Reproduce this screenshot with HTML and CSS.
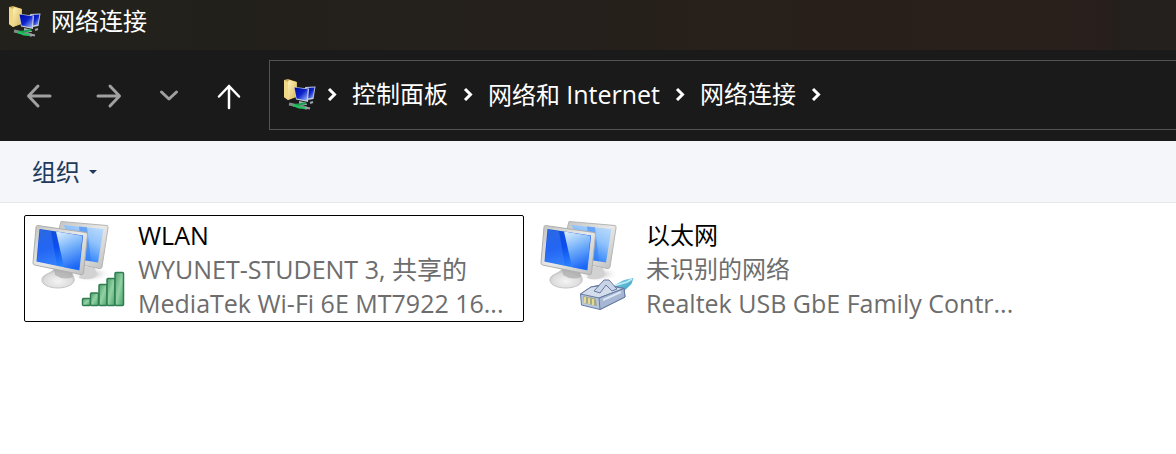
FILE: index.html
```html
<!DOCTYPE html>
<html lang="zh-CN">
<head>
<meta charset="utf-8">
<meta name="viewport" content="width=device-width, initial-scale=1">
<title>网络连接</title>
<link rel="stylesheet" href="styles.css">
</head>
<body>
<svg class="defs" width="0" height="0" aria-hidden="true">
  <defs>
    <linearGradient id="gold" x1="0" x2="1" y1="0" y2="1"><stop offset="0" stop-color="#fff3b8"/><stop offset="1" stop-color="#d9b65a"/></linearGradient>
    <linearGradient id="navy" x1="0" x2="1" y1="0" y2="1"><stop offset="0" stop-color="#000a9c"/><stop offset=".5" stop-color="#0c22cc"/><stop offset="1" stop-color="#a9c4fb"/></linearGradient>
    <linearGradient id="screen" x1="0" x2=".3" y1="0" y2="1"><stop offset="0" stop-color="#1350d2"/><stop offset=".5" stop-color="#0b4df0"/><stop offset="1" stop-color="#2c86ff"/></linearGradient>
    <linearGradient id="glare" x1=".2" x2=".5" y1="0" y2="1"><stop offset="0" stop-color="#d5eafd"/><stop offset=".45" stop-color="#76b2fa"/><stop offset="1" stop-color="#1a66f8"/></linearGradient>
    <linearGradient id="rear" x1="1" x2=".4" y1="0" y2="1"><stop offset="0" stop-color="#c5e0fc"/><stop offset=".45" stop-color="#8fc2fb"/><stop offset="1" stop-color="#1670fa"/></linearGradient>
    <linearGradient id="frame" x1="0" x2="1" y1="0" y2="1"><stop offset="0" stop-color="#c4c4c2"/><stop offset=".5" stop-color="#e9e9e7"/><stop offset="1" stop-color="#bdbdbb"/></linearGradient>
    <radialGradient id="stand" cx=".5" cy=".65" r=".6"><stop offset="0" stop-color="#f4f4f4"/><stop offset=".7" stop-color="#dcdcdc"/><stop offset="1" stop-color="#bdbdbd"/></radialGradient>
    <radialGradient id="shade"><stop offset="0" stop-color="#8d8d8d"/><stop offset="1" stop-color="#fff" stop-opacity="0"/></radialGradient>
    <linearGradient id="signal" x1="0" x2="1" y1="0" y2="1"><stop offset="0" stop-color="#4fa06c"/><stop offset=".5" stop-color="#92d2a4"/><stop offset="1" stop-color="#49a068"/></linearGradient>
    <linearGradient id="cable" x1="0" x2="1" y1="0" y2="1"><stop offset="0" stop-color="#93d8ec"/><stop offset="1" stop-color="#2c9cc0"/></linearGradient>

    <symbol id="connections" viewBox="0 0 34 34">
      <path d="M2 3 6 2 15 5V19L6 23 2 20Z" fill="#cda954"/>
      <path d="M2 3 6 5V23L2 20Z" fill="#efd888"/>
      <path d="M6 5 7 3 14.500 5V20L6 23Z" fill="url(#gold)"/>
      <path d="M23 10 33.500 9.500 31.500 22 26 23Z" fill="#c3cede"/>
      <path d="M24 11 32.500 10.500 30.800 20.500 26 21.500Z" fill="url(#navy)"/>
      <path d="M12 10 27 11.500 26 25 14 22.500Z" fill="#c6cddb"/>
      <path d="M12.500 10.500 25.800 12.300 24.800 23.400 14.600 21.400Z" fill="url(#navy)"/>
      <path d="M17 24 24 25.500 25 28 17 28Z" fill="#aab0b5"/>
      <path d="M7 27 12 28 18 28.500 25 31.500" fill="none" stroke="#7f8d8a" stroke-width="3"/>
      <path d="M11 29 17 27.500 24 26" fill="none" stroke="#12a34a" stroke-width="2"/>
      <path d="M11 28 17 30.500 23 31" fill="none" stroke="#20c45f" stroke-width="2"/>
      <path d="M23 30.500 28 31.500M28 26 31 25" stroke="#9ba4ad" stroke-width="2"/>
    </symbol>

    <symbol id="computers" viewBox="0 0 96 92">
      <ellipse cx="60" cy="56" rx="21" ry="8" fill="url(#shade)" opacity=".75"/>
      <path d="M53 48 65 50 67 57C64 62 54 62 49 60Z" fill="#d2d2d2"/>
      <path d="M31 3.500 77 7.500Q78.500 8 78 10L72 49Q71.500 51 69 50.500L48 46 29 11Z" fill="url(#frame)" stroke="#b4b6b6"/>
      <path d="M33.500 7 73.500 11 68 44.500 50 41.500 35 10Z" fill="url(#rear)"/>
      <path d="M49 8.500 57 9.300 61 43.300 53 42Z" fill="#2c79f5" opacity=".5"/>
      <ellipse cx="29" cy="60" rx="18.500" ry="8.500" fill="url(#shade)"/>
      <path d="M24 51 42 55 44 60C46 66 37 70 28 70 18 70 11 66 12 61 13 56 21 56 24 51Z" fill="url(#stand)" stroke="#c6c6c6"/>
      <path d="M24 51 42 55 43 59Q34 63 25 57Z" fill="#a9a9a9" opacity=".7"/>
      <path d="M7.500 7.500 56 14.500Q57.800 15 57.500 17L53.500 55Q53 57 51 56.500L4.500 47Q2.700 46.500 3 44.500L6 9Q6.200 7.500 7.500 7.500Z" fill="url(#frame)" stroke="#adafaf"/>
      <path d="M9.500 11 53 17.500 49.500 52.500 6.500 43.500Z" fill="url(#screen)"/>
      <path d="M26 13.600 52.500 17.700 49 52 34 49Z" fill="url(#glare)"/>
      <path d="M10 11.500 21 13.200 27 47.500 7 43Z" fill="#4a8dfb" opacity=".4"/>
    </symbol>
  </defs>
</svg>

<header class="titlebar">
  <svg class="folder-icon" aria-hidden="true"><use href="#connections"/></svg>
  <h1 class="title">网络连接</h1>
</header>

<nav class="navbar" aria-label="导航">
  <div class="nav-buttons">
    <button class="nav-button" aria-label="后退" disabled>
      <svg width="28" height="28" viewBox="0 0 28 28"><path d="M25 14H4M13 4 3.500 14 13 24"/></svg>
    </button>
    <button class="nav-button" aria-label="前进" disabled>
      <svg width="28" height="28" viewBox="0 0 28 28"><path d="M3 14H24M15 4 24.500 14 15 24"/></svg>
    </button>
    <button class="nav-button" aria-label="最近位置">
      <svg width="28" height="28" viewBox="0 0 28 28"><path d="M6.500 10 14 17 21.500 10"/></svg>
    </button>
    <button class="nav-button up" aria-label="上移">
      <svg width="28" height="28" viewBox="0 0 28 28"><path d="M14 26V4M4 14.500 14 4 24 14.500"/></svg>
    </button>
  </div>
  <div class="address">
    <svg class="folder-icon" aria-hidden="true"><use href="#connections"/></svg>
    <svg class="chevron" viewBox="0 0 10 14" aria-hidden="true"><path d="M2 2 7.500 7.500 2 13"/></svg>
    <a class="crumb" href="#">控制面板</a>
    <svg class="chevron" viewBox="0 0 10 14" aria-hidden="true"><path d="M2 2 7.500 7.500 2 13"/></svg>
    <a class="crumb" href="#">网络和 <span class="latin">Internet</span></a>
    <svg class="chevron" viewBox="0 0 10 14" aria-hidden="true"><path d="M2 2 7.500 7.500 2 13"/></svg>
    <a class="crumb" href="#">网络连接</a>
    <svg class="chevron" viewBox="0 0 10 14" aria-hidden="true"><path d="M2 2 7.500 7.500 2 13"/></svg>
  </div>
</nav>

<div class="toolbar">
  <button class="organize">组织 <svg width="8" height="4" viewBox="0 0 8 4" aria-hidden="true"><path d="M0 0H8L4 4Z" fill="#1e395b"/></svg></button>
</div>

<main class="items">
  <button class="item selected">
    <svg class="device" viewBox="0 0 96 92" aria-hidden="true">
      <use href="#computers"/>
      <g fill="url(#signal)" stroke="#2f7d50" stroke-width="1.500">
        <rect x="52.500" y="80.500" width="8" height="7" rx="1"/>
        <rect x="60.500" y="75" width="8" height="12.500" rx="1"/>
        <rect x="69" y="66.500" width="8" height="21" rx="1"/>
        <rect x="77" y="60.500" width="8" height="27" rx="1"/>
        <rect x="85" y="54.500" width="8.500" height="33" rx="1"/>
      </g>
    </svg>
    <span class="info">
      <span class="name latin">WLAN</span>
      <span class="detail latin">WYUNET-STUDENT 3, 共享的</span>
      <span class="detail latin">MediaTek Wi-Fi 6E MT7922 16...</span>
    </span>
  </button>
  <button class="item">
    <svg class="device" viewBox="0 0 96 92" aria-hidden="true">
      <use href="#computers"/>
      <path d="M73 69 86 62 95.500 60 93.500 66 85 74 76 74Z" fill="url(#cable)"/>
      <path d="M75 68 89 64 94 61" fill="none" stroke="#c3eef6" stroke-width="1.500"/>
      <g stroke="#6579a0" stroke-linejoin="round">
        <path d="M42.500 76 53 69 67 66 86 70.500 87 79 62 91.500 43.500 87Z" fill="#b8c7de"/>
        <path d="M42.500 76 53 69 67 67 86 70.500 61 80Z" fill="#d3ddeb"/>
        <path d="M61 80 86 70.500 87 79 62 91.500Z" fill="#a6b7d3"/>
        <path d="M56 73 66 62 71 62 79 71 74 73 68 67 62 75Z" fill="#c9d5e7"/>
      </g>
      <path d="M45 78 58 80.500 59 88 46 85Z" fill="#a5a98c"/>
      <path d="M47 79V85M51 80V86M55 81V87" stroke="#e6da92" stroke-width="2"/>
      <path d="M65 82 83 74" stroke="#dae5f4" stroke-width="2"/>
    </svg>
    <span class="info">
      <span class="name">以太网</span>
      <span class="detail">未识别的网络</span>
      <span class="detail latin">Realtek USB GbE Family Contr...</span>
    </span>
  </button>
</main>
</body>
</html>
```
FILE: styles.css
```css
* {
  box-sizing: border-box;
}

body {
  margin: 0;
  background: #fff;
  font-family: "Open Sans", "Noto Sans CJK SC", sans-serif;
  font-size: 24px;
  line-height: 34px;
}

button {
  margin: 0;
  padding: 0;
  border: 0;
  background: none;
  font: inherit;
  color: inherit;
}

.defs {
  position: absolute;
}

.latin {
  font-size: 25px;
}

.titlebar {
  display: flex;
  align-items: center;
  gap: 10px;
  height: 50px;
  padding: 0 7px 9px;
  background: linear-gradient(90deg, #22211c 0%, #25201b 50%, #291f1a 75%, #291f1c 93%, #23201d 96%);
  color: #fff;
}

.title {
  margin: 0;
  font-size: 24px;
  font-weight: 400;
}

.folder-icon {
  flex: none;
  width: 34px;
  height: 34px;
}

.navbar {
  display: flex;
  align-items: center;
  padding: 10px 0 11px;
  background: #1a1a1a;
  color: #fff;
}

.nav-buttons {
  display: flex;
  align-items: center;
  gap: 32px;
  padding: 2px 26px 0 25px;
}

.nav-button {
  display: flex;
  width: 28px;
  color: #a0a0a0;
}

.nav-button:nth-child(2) {
  margin-left: 10px;
}

.nav-button.up {
  color: #fff;
}

.nav-button path {
  fill: none;
  stroke: currentColor;
  stroke-width: 3;
  stroke-linecap: round;
  stroke-linejoin: round;
}

.nav-button.up path {
  stroke-width: 2.5;
}

.address {
  display: flex;
  flex: 1;
  align-items: center;
  height: 70px;
  padding: 0 0 2px 12px;
  border: 1px solid #535353;
  border-right: 0;
  white-space: nowrap;
}

.address .folder-icon {
  margin-right: 11px;
}

.crumb {
  padding: 0 15px;
  color: #fff;
  text-decoration: none;
}

.chevron {
  flex: none;
  width: 10px;
  height: 14px;
}

.chevron path {
  fill: none;
  stroke: #fff;
  stroke-width: 3;
}

.toolbar {
  display: flex;
  align-items: center;
  height: 62px;
  padding-left: 32px;
  border-bottom: 1px solid #e5e7ea;
  background: #f4f6f9;
  color: #1e395b;
}

.organize {
  display: flex;
  align-items: center;
  gap: 9px;
}

.items {
  display: grid;
  grid-template-columns: repeat(auto-fill, 500px);
  gap: 8px;
  padding: 12px 24px;
}

.item {
  display: flex;
  align-items: flex-start;
  gap: 12px;
  padding: 2px 5px 1px;
  border: 1px solid transparent;
  border-radius: 2px;
  text-align: left;
}

.item.selected {
  border-color: #000;
}

.device {
  flex: none;
  width: 96px;
  height: 92px;
}

.info {
  display: flex;
  flex-direction: column;
  white-space: nowrap;
}

.name {
  color: #000;
}

.detail {
  color: #6d6d6d;
}
```
